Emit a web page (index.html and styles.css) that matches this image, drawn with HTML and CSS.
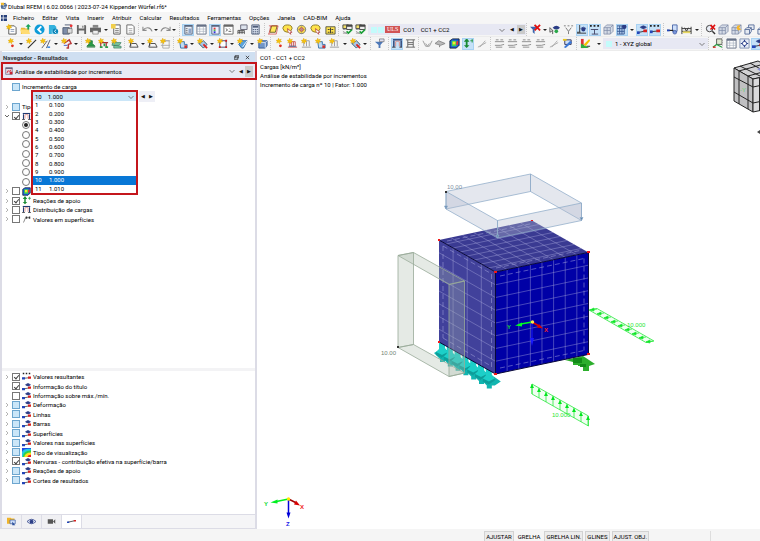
FILE: index.html
```html
<!DOCTYPE html>
<html lang="pt">
<head>
<meta charset="utf-8">
<title>Dlubal RFEM</title>
<link rel="stylesheet" href="styles.css">
</head>
<body>
<svg class="defs" aria-hidden="true">
  <symbol id="i-new" viewBox="0 0 12 12"><path d="M3 2h6l2 2v7H3z" fill="#fff" stroke="#555"/><path d="M5 6h4M5 8h4" stroke="#8a9ab5"/><use href="#star"/></symbol>
  <symbol id="star" viewBox="0 0 12 12"><path d="M3 0l.8 2L6 1.200 5 3l1.500 1-2 .3L4 6.500 2.800 4.700.8 5.500 1.500 3.500 0 2.500l2-.2z" fill="#f5c211" stroke="#d89a00" stroke-width=".3"/></symbol>
  <symbol id="i-open" viewBox="0 0 12 12"><path d="M1 4h4l1 1h4v6H1z" fill="#e8b838"/><path d="M0 6h9l2 5H2z" fill="#ffdc73"/><path d="M9 0L6 3h2v3h2V3h2z" fill="#18a558"/></symbol>
  <symbol id="i-back" viewBox="0 0 12 12"><circle cx="6" cy="6" r="5.500" fill="#0d9bd8"/><path d="M8 2.500L4.500 6 8 9.500" fill="none" stroke="#fff" stroke-width="2"/></symbol>
  <symbol id="i-cloud" viewBox="0 0 12 12"><path d="M1 1h6l2 2v8H1z" fill="#33b1dd"/><path d="M4 7h7v4H4z" fill="#8ad5ee"/><circle cx="8" cy="8" r="3" fill="#0b84b8"/><path d="M7 8l2-2M7 8l2 2" stroke="#fff"/></symbol>
  <symbol id="i-parts" viewBox="0 0 12 12"><path d="M1 4h7v7H1z" fill="#7e8da8" stroke="#4d5a73"/><path d="M3 1h7v7" fill="none" stroke="#4d5a73"/><path d="M6 5h5v5H6z" fill="#ddd" stroke="#555" stroke-width=".6"/><circle cx="10" cy="2" r="1.500" fill="#e33"/></symbol>
  <symbol id="i-save" viewBox="0 0 12 12"><path d="M1 1h9l1 1v9H1z" fill="#666"/><path d="M3 1h6v4H3zM3 7h6v4H3z" fill="#eee"/><path d="M7 2h1v2H7z" fill="#555"/></symbol>
  <symbol id="i-print" viewBox="0 0 12 12"><path d="M3 1h6v3H3z" fill="#888"/><path d="M0 4h12v5H0z" fill="#666"/><path d="M3 7h6v4H3z" fill="#eee" stroke="#555" stroke-width=".6"/></symbol>
  <symbol id="i-report" viewBox="0 0 12 12"><path d="M3 1h7v10H3z" fill="#fff" stroke="#555"/><path d="M4.500 5h4M4.500 7h4M4.500 9h4" stroke="#777"/><path d="M0 0h5v5H0z" fill="#f1cf4b"/></symbol>
  <symbol id="i-doc" viewBox="0 0 12 12"><path d="M2 1h6l2 2v8H2z" fill="#fff" stroke="#666"/><path d="M4 5h4M4 7h4M4 9h4" stroke="#888" stroke-width=".7"/></symbol>
  <symbol id="i-undo" viewBox="0 0 12 12"><path d="M1 3v4h4M1 7c3-4 8-4 10 1" fill="none" stroke="#8c8c8c" stroke-width="1.200"/></symbol>
  <symbol id="i-redo" viewBox="0 0 12 12"><path d="M11 3v4H7M11 7C8 3 3 3 1 8" fill="none" stroke="#8c8c8c" stroke-width="1.200"/></symbol>
  <symbol id="i-nav" viewBox="0 0 12 12"><path d="M2 1h8v10H2z" fill="#e8edf5" stroke="#56657e"/><path d="M2 1h8v2H2z" fill="#56657e"/><path d="M6 5h3v5H6z" fill="#8fa4c6"/><path d="M3 5h2M3 7h2M3 9h2" stroke="#444" stroke-width=".7"/></symbol>
  <symbol id="i-table" viewBox="0 0 12 12"><path d="M1 1h10v10H1z" fill="#fff" stroke="#677287"/><path d="M1 1h10v2H1z" fill="#677287"/><path d="M1 5.500h10M1 8h10M4 3v8M8 3v8" stroke="#a5adbb" stroke-width=".7"/></symbol>
  <symbol id="i-color" viewBox="0 0 12 12"><path d="M2 1h8v10H2z" fill="#eef" stroke="#56657e"/><path d="M2 1h8v2H2z" fill="#56657e"/><path d="M4 4h2v2H4z" fill="#e33"/><path d="M4 6h2v2H4z" fill="#4b4"/><path d="M4 8h2v2H4z" fill="#33d"/></symbol>
  <symbol id="i-con" viewBox="0 0 12 12"><path d="M1 1h10v10H1z" fill="#fff" stroke="#666"/><path d="M1 1h10v2H1z" fill="#666"/><path d="M3 5l2 1.500L3 8M6 8h3M7 5l1 1" fill="none" stroke="#333" stroke-width=".8"/></symbol>
  <symbol id="i-wire" viewBox="0 0 12 12"><path d="M4 1h7v5H4z" fill="#dde3ed" stroke="#667"/><path d="M1 11V7h7v4M3 7v4M5.500 7v4M1 9h7" fill="none" stroke="#333" stroke-width=".8"/></symbol>
  <symbol id="i-calc" viewBox="0 0 12 12"><path d="M2 1h8v10H2z" fill="#dce4f2" stroke="#4f5d78"/><path d="M3 2h6v2H3z" fill="#4f5d78"/><path d="M3 6h6M3 8h6M3 10h6" stroke="#4f5d78" stroke-dasharray="1.500 .7"/></symbol>
  <symbol id="i-poly" viewBox="0 0 12 12"><path d="M4 2h6L8 9H2z" fill="#ffe95c" stroke="#6b5f20"/><path d="M1 2h10M9 11H0M3 2L1 11M11 2L9 11" stroke="#c33" stroke-width=".7"/></symbol>
  <symbol id="i-las" viewBox="0 0 12 12"><path d="M1 5q0-4 5-4t5 4q-1 4-5 4T1 5z" fill="#ffe34c" stroke="#8b7a20"/><path d="M6 5l5 4-2 .3.5 2-3-3z" fill="#fff" stroke="#a33" stroke-width=".8"/></symbol>
  <symbol id="i-ring" viewBox="0 0 12 12"><circle cx="6" cy="6" r="4.500" fill="#ffe34c" stroke="#777"/><circle cx="6" cy="6" r="2" fill="#f9a" stroke="#a44"/><path d="M6 1v10M1 6h10" stroke="#887" stroke-width=".5"/></symbol>
  <symbol id="i-box" viewBox="0 0 12 12"><path d="M1 3h10v8H1z" fill="#ffe34c" stroke="#554"/><path d="M3 6h2M7 6h2M3 9h2M7 9h2M6 4v6" stroke="#333"/></symbol>
  <symbol id="i-check" viewBox="0 0 12 12"><path d="M1 1h6v4H1z" fill="#f1df6a" stroke="#444"/><path d="M5 1h6v5H5z" fill="#eee" stroke="#444"/><path d="M5 1h6v2H5z" fill="#444"/><path d="M1 8l5 3M1 6h3M1 10h4" stroke="#999"/><path d="M5 8l2 2 4-4" fill="none" stroke="#1a9d35" stroke-width="1.800"/></symbol>
  <symbol id="i-fx" viewBox="0 0 12 12"><path d="M0 3h8L5 6v5L3 9V6z" fill="#3a66b0"/><path d="M5 1l6 6M11 1L5 7" stroke="#e01010" stroke-width="2"/></symbol>
  <symbol id="i-filter" viewBox="0 0 12 12"><path d="M1 4h9L7 7.500V11H5V7.500z" fill="#4d78b8"/><path d="M6 1h5v3H6z" fill="#dde" stroke="#555" stroke-width=".6"/></symbol>
  <symbol id="i-eye" viewBox="0 0 12 12"><path d="M1 4v5l3-2zM4 7v4" fill="none" stroke="#555"/><path d="M4 4q4-4 8 0-4 4-8 0" fill="#2b3d86"/><circle cx="8" cy="8" r="2" fill="#2aa84a"/></symbol>
  <symbol id="i-hang" viewBox="0 0 12 12"><path d="M1 2h2M5 2h2M9 2h2M3 4l3 4 3-4M6 8v3" stroke="#777" fill="none"/></symbol>
  <symbol id="i-sup" viewBox="0 0 12 12"><path d="M4 1v8M1 10h10M1 9h4" stroke="#333" fill="none"/><circle cx="8" cy="6" r="2.200" fill="#2b3d86"/><path d="M5 5q3-3 6 0" stroke="#2b3d86" fill="none"/></symbol>
  <symbol id="i-xxx" viewBox="0 0 12 12"><path d="M1 2h2M5 2h2M9 2h2" stroke="#222" stroke-width="2"/><path d="M2 6h8M6 6v5M3 11h7" stroke="#446" fill="none"/></symbol>
  <symbol id="i-cube" viewBox="0 0 12 12"><path d="M1 4l3-3h7v7l-3 3H1z" fill="#d5dbe6" stroke="#7c88a5" stroke-width=".8"/><path d="M1 4h7l3-3M8 4v7M4.500 4v7M1 7h7" fill="none" stroke="#7c88a5" stroke-width=".8"/></symbol>
  <symbol id="i-cubes" viewBox="0 0 12 12"><use href="#i-cube"/><path d="M7 2l3-1-1 3 2 2-3 1-2-2z" fill="#f5b52a"/></symbol>
  <symbol id="i-pair" viewBox="0 0 12 12"><path d="M5 1h6v5H5z" fill="#e5eaf2" stroke="#5c719c"/><path d="M1 6l2-2h5v4l-2 3H1z" fill="#e5eaf2" stroke="#5c719c"/><path d="M1 6h5v5M6 6l2-2" fill="none" stroke="#5c719c"/></symbol>
  <symbol id="i-mesh" viewBox="0 0 12 12"><path d="M1 2h8v9H1z" fill="#b8d0f0" stroke="#375a94"/><path d="M1 5h8M1 8h8M4 2v9M6.500 2v9" stroke="#375a94"/><circle cx="9" cy="3" r="2.500" fill="#2b3d86"/></symbol>
  <symbol id="i-res" viewBox="0 0 12 12"><path d="M1 9.500l10-2" stroke="#333" stroke-width="1"/><path d="M0 8h4v3H0z" fill="#2346b8"/><path d="M8 6h4v3H8z" fill="#d82020"/><path d="M4 3.500q4-4 8 0-4 4-8 0" fill="#3d4f94"/><circle cx="8" cy="3.500" r="1.600" fill="#2b3d86"/></symbol>
  <symbol id="i-resx" viewBox="0 0 12 12"><path d="M1 2h2M5 2h2M9 2h2" stroke="#222" stroke-width="2"/><path d="M1 8.500l10-1" stroke="#333"/><path d="M0 7h4v3H0z" fill="#2346b8"/><path d="M8 6h4v3H8z" fill="#d82020"/></symbol>
  <symbol id="i-line" viewBox="0 0 12 12"><path d="M1 7l9-2" stroke="#222"/><path d="M0 6h3v2H0z" fill="#2346b8"/><path d="M9 4h3v2H9z" fill="#d82020"/></symbol>
  <symbol id="i-rwin" viewBox="0 0 12 12"><path d="M6 1h5v7H6z" fill="#cfe0fa" stroke="#4a67a8"/><path d="M0 7h7" stroke="#222" stroke-width="1.300"/><path d="M0 6h3v2H0z" fill="#2346b8"/><circle cx="8.500" cy="9" r="2" fill="#7795d8" stroke="#3550a0" stroke-width=".7"/></symbol>
  <symbol id="i-dim" viewBox="0 0 12 12"><path d="M1 3v8M11 3v8M1 5h10M1 8h10M4 4l2 4 2-4" stroke="#333" fill="none"/><path d="M2 8h8v2H2z" fill="#e8d860"/></symbol>
  <symbol id="i-find" viewBox="0 0 12 12"><circle cx="5" cy="5" r="3.500" fill="#e9eef6" stroke="#333"/><path d="M8 8l3 3" stroke="#333" stroke-width="1.500"/><path d="M6 1l5 5M11 1L6 6" stroke="#e01010" stroke-width="1.700"/></symbol>
  <symbol id="i-node" viewBox="0 0 12 12"><use href="#star" x="2"/><circle cx="7" cy="8.500" r="1.500" fill="#e03020"/></symbol>
  <symbol id="i-ln" viewBox="0 0 12 12"><path d="M2 11l9-9" stroke="#333" stroke-width="1.300"/><use href="#star"/></symbol>
  <symbol id="i-lnx" viewBox="0 0 12 12"><path d="M2 11l6-8M7 11l4-9" stroke="#556" stroke-width="1"/><path d="M8 10h3" stroke="#27d" stroke-width="1.500"/><use href="#star"/></symbol>
  <symbol id="i-mem" viewBox="0 0 12 12"><path d="M3 6l6-4 2 4-3 1v4H6" fill="none" stroke="#b83838" stroke-width="1.600"/><path d="M3 8h4" stroke="#35c"/><use href="#star"/></symbol>
  <symbol id="i-gs" viewBox="0 0 12 12"><path d="M5 3h3v3l3 3H2l3-3zM2 10h9" fill="#2a9a48" stroke="#14702c" stroke-width=".8"/><use href="#star"/></symbol>
  <symbol id="i-rs" viewBox="0 0 12 12"><path d="M2 5h9M3 5v6M9 5v6" stroke="#a33" stroke-width="1.300"/><path d="M2 9h3v2H2zM8 9h3v2H8zM6 6h2v3H6z" fill="#28a04a"/><use href="#star"/></symbol>
  <symbol id="i-surf" viewBox="0 0 12 12"><path d="M2 5h9l-2 3H1zM3 8l8 1v2H3z" fill="#7fc8a0" stroke="#36755a" stroke-width=".7"/><use href="#star"/></symbol>
  <symbol id="i-im" viewBox="0 0 12 12"><path d="M3 3v6M3 6h6l2 4H2z" fill="none" stroke="#444"/><use href="#star"/></symbol>
  <symbol id="i-sec" viewBox="0 0 12 12"><path d="M3 3h7v8H3zM1 3h10M1 8h10" fill="none" stroke="#aaa"/><use href="#star"/></symbol>
  <symbol id="i-bl" viewBox="0 0 12 12"><path d="M3 4h5v3h3v4H4z" fill="#bfdcf5" stroke="#3670a8"/><path d="M8 8h3v3H8z" fill="#c33"/><use href="#star"/></symbol>
  <symbol id="i-rd" viewBox="0 0 12 12"><path d="M2 6l5-3 4 4-4 4z" fill="#a8c8e8" stroke="#356"/><path d="M7 7l4 4" stroke="#d22" stroke-width="2"/><use href="#star"/></symbol>
  <symbol id="i-sq" viewBox="0 0 12 12"><path d="M3 3h7v7H3z" fill="#fff" stroke="#446"/><path d="M2 9h2v2H2zM9 9h2v2H9zM9 2h2v2H9z" fill="#c22"/><use href="#star"/></symbol>
  <symbol id="i-sf" viewBox="0 0 12 12"><path d="M2 7l3-4h6l-4 8H5z" fill="#5aa2dc" stroke="#2c68a0"/><path d="M6 10l5-7" stroke="#fff"/><use href="#star"/></symbol>
  <symbol id="i-bx" viewBox="0 0 12 12"><path d="M2 5l2-2h7v5l-2 3H2z" fill="#7196c8" stroke="#345a92"/><path d="M2 5h7v6M9 5l2-2" fill="none" stroke="#d5e2f5"/><use href="#star"/></symbol>
  <symbol id="i-ld" viewBox="0 0 12 12"><path d="M3 4h6v5H3zM1 10h10M5 4v5M7 4v5" fill="none" stroke="#c55"/><path d="M2 9h8" stroke="#47a"/><use href="#star"/></symbol>
  <symbol id="i-gr" viewBox="0 0 12 12"><path d="M3 3h6v6M1 10h10M3 4v5M6 4v5" fill="none" stroke="#999"/><use href="#star"/></symbol>
  <symbol id="i-arc" viewBox="0 0 12 12"><path d="M1 2h10" stroke="#223a70" stroke-width="1.500"/><path d="M2 3v7M10 3v7" stroke="#223a70" stroke-width="1.500"/><path d="M4 3.500h4M4 4v5M8 4v5" stroke="#e08a80" stroke-width="1"/><path d="M0 10h4M8 10h4" stroke="#444"/></symbol>
  <symbol id="i-hh" viewBox="0 0 12 12"><path d="M1 2h10M1 10h10M3 2v8M9 2v8M3 5h6M3 7h6" stroke="#666"/></symbol>
  <symbol id="i-vv" viewBox="0 0 12 12"><path d="M1 3l3 6h4l3-6M4 6l2 3 2-3" fill="none" stroke="#999"/></symbol>
  <symbol id="i-tab" viewBox="0 0 12 12"><path d="M0 6l4-3 7 3-5 2z" fill="#bbb" stroke="#888"/><path d="M5 8v2" stroke="#777"/></symbol>
  <symbol id="i-fem" viewBox="0 0 12 12"><path d="M1 3l3-2h7v7l-3 3H1z" fill="#1c5de0" stroke="#123"/><path d="M3 3h5v6H3z" fill="#3fd84f"/><path d="M4 4h3v3H4z" fill="#ffe22e"/><path d="M8 4l2-1v4l-2 1z" fill="#e33"/></symbol>
  <symbol id="i-reac" viewBox="0 0 12 12"><path d="M4 3v6" stroke="#1a8a34" stroke-width="2"/><path d="M4 0L1 4h6zM1 8h6l-3 3z" fill="#1a8a34"/><path d="M8 3h4M10 1v4" stroke="#2a9a48"/></symbol>
  <symbol id="i-diag" viewBox="0 0 12 12"><path d="M1 10l9-5M3 10l6-7" stroke="#aaa"/></symbol>
  <symbol id="i-as" viewBox="0 0 12 12"><path d="M1 4h10M2 2h3M7 2h3M1 8h6l4-1M2 10h7" stroke="#8a8a8a" fill="none"/></symbol>
  <symbol id="i-pen" viewBox="0 0 12 12"><path d="M3 2h7v5H3z" fill="#cfe0fa" stroke="#335"/><path d="M2 10l7-7 2 2-7 6z" fill="#3a78d8"/><path d="M1 1h4v2H1z" fill="#e8c71e"/></symbol>
  <symbol id="i-iso" viewBox="0 0 12 12"><path d="M0 0h12v12H0z" fill="#1d48e0"/><path d="M0 5q2-4 9-4h3v11H0z" fill="#22c9e8"/><path d="M1 12Q1 4 12 3v9z" fill="#2fd24a"/><path d="M3 12q1-6 9-6v6z" fill="#ffdf20"/><path d="M7 12q1-3 5-3v3z" fill="#e81f1f"/></symbol>
  <symbol id="i-clr" viewBox="0 0 12 12"><path d="M1 1h3v10H1z" fill="#d33"/><path d="M1 6l9 5H1z" fill="#2fae3f"/><path d="M4 7l6-6 1 2-5 6z" fill="#f2c400"/><path d="M7 9h4" stroke="#222"/></symbol>
  <symbol id="i-ax" viewBox="0 0 12 12"><path d="M5 1h6v6H5z" fill="#dfe8d0" stroke="#555"/><path d="M1 10l4-3 6 3" fill="none" stroke="#28a040" stroke-width="1.300"/><path d="M1 10h3" stroke="#d22" stroke-width="1.500"/></symbol>
  <symbol id="i-gear" viewBox="0 0 12 12"><path d="M1 1h10v10H1z" fill="#e6ecf8" stroke="#8090b0"/><path d="M6 2v8M2 6h8" stroke="#2a3f8a" stroke-width="1.300"/><circle cx="6" cy="6" r="2.300" fill="#fff" stroke="#2a3f8a"/></symbol>
  <symbol id="i-flag" viewBox="0 0 12 12"><path d="M2 10l3-7" stroke="#666"/><path d="M5 2h2v3H5zM9 2h2v3H9z" fill="#333"/><path d="M7 3.500h2" stroke="#333"/></symbol>
  <symbol id="i-cam" viewBox="0 0 12 12"><path d="M1 3h7v6H1zM8 6l3-3v6z" fill="#555"/></symbol>
  <symbol id="i-view" viewBox="0 0 12 12"><path d="M0 6q6-6 12 0-6 6-12 0" fill="#dbe2f2" stroke="#2b3d86"/><circle cx="6" cy="6" r="2.500" fill="#2b3d86"/></symbol>
  <symbol id="i-proj" viewBox="0 0 12 12"><path d="M0 1h5l1 1h4v7H0z" fill="#f0b429"/><path d="M4 4h7v5H4z" fill="#cfe0fa" stroke="#4a67a8"/><path d="M7 6l4 5H7z" fill="#2b50a0"/></symbol>
  <symbol id="i-stab" viewBox="0 0 12 12"><path d="M1 1h10v10H1z" fill="#e6dfe8" stroke="#6a6580"/><path d="M1 1h10v2H1z" fill="#6a6580"/><path d="M3 9q1-5 3-3t3-2" fill="none" stroke="#c23" stroke-width="1.200"/><path d="M7 7h4v4H7z" fill="#c23"/></symbol>
  <symbol id="chev" viewBox="0 0 12 12"><path d="M1 4l5 5 5-5" fill="none" stroke="#555" stroke-width="1.500"/></symbol>
  <symbol id="logo" viewBox="0 0 12 12"><path d="M2 3l6-2 3 4-3 6-6-1-1-4z" fill="#4f6b94"/><path d="M1 1h5v4H2z" fill="#f0b92a"/><path d="M5 5l5-3M4 9l6-2M4 4l4 6" stroke="#dbe6f5" stroke-width=".8"/></symbol>
</svg>

<div class="app">
  <header class="title"><svg><use href="#logo"/></svg><h1>Dlubal RFEM | 6.02.0066 | 2023-07-24 Kippender Würfel.rf6*</h1></header>
  <nav class="menu" aria-label="Menu">
    <svg viewBox="0 0 8 8" aria-hidden="true"><path d="M0 0h8v8H0z" fill="#27407a"/><path d="M0 4h8M3 0v8" stroke="#fff"/></svg>
    <a href="#">Ficheiro</a><a href="#">Editar</a><a href="#">Vista</a><a href="#">Inserir</a><a href="#">Atribuir</a><a href="#">Calcular</a><a href="#">Resultados</a><a href="#">Ferramentas</a><a href="#">Opções</a><a href="#">Janela</a><a href="#">CAD-BIM</a><a href="#">Ajuda</a>
  </nav>
  <div class="bar" id="bar1" role="toolbar" aria-label="Principal"></div>
  <div class="bar" id="bar2" role="toolbar" aria-label="Modelo"></div>

  <main class="work">
    <aside class="navigator">
      <div class="nav-head"><h2>Navegador - Resultados</h2>
        <button aria-label="Destacar"><svg viewBox="0 0 12 12"><path d="M3 1h8v6H3zM1 4h8v7H1z" fill="#cfdff1" stroke="#222" stroke-width="1.500"/></svg></button>
        <button aria-label="Fechar"><svg viewBox="0 0 12 12"><path d="M2 2l8 8M10 2l-8 8" stroke="#222" stroke-width="1.700"/></svg></button>
      </div>
      <div class="analysis">
        <svg class="ic"><use href="#i-stab"/></svg>
        <select aria-label="Análise"><option>Análise de estabilidade por incrementos</option></select>
        <svg class="chev"><use href="#chev"/></svg>
        <button class="step" aria-label="Anterior">◀</button><button class="step grey" aria-label="Seguinte">▶</button>
      </div>
      <section class="upper">
        <label class="root"><input type="checkbox" class="part">Incremento de carga</label>
        <div class="increment">
          <div class="drop">
            <div class="drop-head">
              <select aria-label="Incremento de carga"><option>10 &nbsp; &nbsp;1.000</option></select>
              <svg class="chev"><use href="#chev"/></svg>
            </div>
            <ul role="listbox" aria-label="Incrementos" id="steps"></ul>
          </div>
          <button class="step" aria-label="Incremento anterior">◀</button><button class="step" aria-label="Incremento seguinte">▶</button>
        </div>
        <div class="tree" id="tree1"></div>
      </section>
      <section class="lower"><div class="tree" id="tree2"></div></section>
      <div class="tabs">
        <button aria-label="Dados"><svg><use href="#i-proj"/></svg></button>
        <button aria-label="Mostrar"><svg><use href="#i-view"/></svg></button>
        <button aria-label="Vistas"><svg><use href="#i-cam"/></svg></button>
        <button class="on" aria-label="Resultados"><svg><use href="#i-line"/></svg></button>
      </div>
    </aside>

    <section class="stage">
      <svg class="scene" viewBox="258 51 502 478" preserveAspectRatio="xMinYMin meet" aria-label="Modelo">
        <defs>
          <path id="g8" d="M1 0v8M2 0v8M3 0v8M4 0v8M5 0v8M6 0v8M7 0v8M0 1h8M0 2h8M0 3h8M0 4h8M0 5h8M0 6h8M0 7h8"/>
          <path id="g4" d="M1 0v8M2 0v8M3 0v8M0 1h4M0 2h4M0 3h4M0 4h4M0 5h4M0 6h4M0 7h4"/>
          <g id="foot"><path d="M-8 0l5-3h8l7 5-6 4h-3v3h-5V6z" fill="#11b5b0"/><path d="M-3-12h6v7l3 4-6 3-6-3 3-3z" fill="#1ccfc8"/><path d="M-6-1l6 3 6-3v2l-6 4-6-3z" fill="#0c8f8c" opacity=".6"/></g>
          <path id="up" d="M0 0l-2 4h4z" fill="#00e61e"/>
        </defs>
        <g><path d="M565 360l18-4 12 8-6 2v5h-6v-5h-5v-1h-5v-3z" fill="#2cae2c"/><path d="M573 358h9v5h-9zM580 364h6v3h-6z" fill="#138a18"/></g>
        <g id="feet"></g>
        <path d="M439 240l56.500 32v102L439 342z" fill="#41419b"/>
        <path d="M439 240l93-19.600 56.500 32-93 19.600z" fill="#3a3a92"/>
        <path d="M495.500 272l93-19.600v102l-93 19.600z" fill="#0000a6"/>
        <g class="mesh">
          <use href="#g4" transform="matrix(14.100 8 0 12.750 439 240)"/>
          <use href="#g8" transform="matrix(7.060 4 11.620 -2.450 439 240)"/>
          <use href="#g8" transform="matrix(11.620 -2.450 0 12.750 495.500 272)"/>
        </g>
        <g class="dash"><path d="M443 246v92M491.500 274v94M443 246l48 27.500M443 338l48 28M500 276l84-17.500M500 368l84-17.500M584 258.500v92M447 241l85-17.500M496 268l84-17.500"/></g>
        <path d="M439 240l56.500 32 93-19.600M495.500 272v102M439 342l56.500 32 93-19.600v-102" fill="none" stroke="#080838"/>
        <g class="frame-top">
          <path d="M446 191.500l84.500-17.500v17.500L446 209z"/><path d="M530.500 174l51 29v17.500l-51-29z"/><path d="M446 191.500l51.500 29V238L446 209z"/><path d="M497.500 220.500l84-17.500v17.500l-84 17.500z"/>
          <path d="M444.500 206h3l-1.500 3zM496 235h3l-1.500 3zM580 217.500h3l-1.500 3z" class="tip"/>
        </g>
        <g class="frame-side">
          <path d="M398 255.500l15.500-3 51 28.500-15.500 3.500z"/><path d="M398 255.500l15.500-3v92l-15.500 3z"/><path d="M398 347.500l15.500-3 51 28.500-15.500 3.500z"/><path d="M449 284.500l15.500-3.500v92l-15.500 3.500z"/>
        </g>
        <path d="M438 239h2v2h-2zM494 271h3v2h-3zM587 251h3v2h-3zM531 220h2v1h-2zM587 353h3v2h-3zM438 341h2v2h-2zM494 373h3v2h-3z" fill="#f01818"/>
        <path d="M445 191h2v2h-2zM397 346h2v2h-2z" fill="#333"/>
        <text x="447" y="189" class="t1">10.00</text><text x="381" y="355" class="t2">10.00</text>
        <g class="load"><path d="M589 310l8-1.500 57 32.500-8 1.500z"/><path d="M532 384l56.500 32v10L532 394z"/><g id="arrows"></g></g>
        <text x="627" y="327" class="t3">10.000</text><text x="552" y="417" class="t3">10.000</text>
        <g>
          <path d="M532 322v18" stroke="#1818ff"/><path d="M530 338h4l-2 8z" fill="#1818ff"/>
          <path d="M532 322l-11 2" stroke="#00ff20" stroke-width="1.500"/><path d="M515 325.500l7-3v4z" fill="#00ff20"/>
          <path d="M532 322l7 4" stroke="#d80000" stroke-width="1.500"/><path d="M543 328.500l-6-1 2-3.500z" fill="#d80000"/>
          <circle cx="532.500" cy="322" r="1.700" fill="#ffe94a"/>
        </g>
        <text x="507" y="329" class="ax g">Y</text><text x="544" y="332" class="ax r">X</text>
        <g>
          <path d="M288.500 499l-12 2.500" stroke="#00f020" stroke-width="1.500"/><path d="M270.500 502.500l7-3v4z" fill="#00f020"/>
          <path d="M288.500 499v15" stroke="#0000d8" stroke-width="1.500"/><path d="M286.500 512.500h4l-2 6z" fill="#0000d8"/>
          <path d="M288.500 499l8 4" stroke="#a00000" stroke-width="1.500"/><path d="M300 505.500l-6-1 2-4z" fill="#d80000"/>
          <circle cx="288.500" cy="499" r="1.700" fill="#ffe600"/>
        </g>
        <text x="264" y="506" class="ax g">Y</text><text x="300" y="509" class="ax r">X</text><text x="286" y="526" class="ax z">Z</text>
        <g stroke="#222" stroke-linejoin="round">
          <path d="M734 68l24-7 24 12-29 6z" fill="#d2d2d4"/><path d="M734 68l19 11v33l-19-11z" fill="#c0c0c2"/><path d="M753 79l29-6v33l-29 6z" fill="#dadadc"/>
          <path d="M739 71v33M748 76v33M734 77l19 10 29-6M734 92l19 11 29-6M759.500 78v33M739 71l25-7M748 76l26-7M740 66l22 11M750 63l21 12" fill="none"/>
        </g>
        <text x="740" y="92" class="cubeface">-Y</text><path d="M757 69l3-1v3z" fill="#8890d8"/><path d="M757 132l3-2v4z" fill="#444"/>
      </svg>
      <div class="info"><p>CO1 - CC1 + CC2</p><p>Cargas [kN/m²]</p><p>Análise de estabilidade por incrementos</p><p>Incremento de carga nº 10 | Fator: 1.000</p></div>
    </section>
  </main>

  <footer class="status"><button class="on">AJUSTAR</button><button>GRELHA</button><button class="on">GRELHA LIN.</button><button class="on">GLINES</button><button class="on">AJUST. OBJ.</button><span class="cell"></span><span class="cell"></span></footer>
</div>
<script src="app.js"></script>
</body>
</html>
```
FILE: styles.css
```css
* { box-sizing: border-box; }
body { margin: 0; font: 6px/9px Roboto, "Open Sans", sans-serif; color: #000; background: #fff; }
h1, h2, p, ul { margin: 0; padding: 0; font-size: inherit; font-weight: normal; }
button, select, input { font: inherit; color: inherit; margin: 0; }
button { border: 0; padding: 0; background: none; }
select { appearance: none; border: 0; padding: 0; background: none; }
svg { display: block; flex: none; }
.defs { position: absolute; width: 0; height: 0; }

.app { display: flex; flex-direction: column; min-height: 100vh; }
.title { display: flex; align-items: center; height: 12px; }
.title svg { width: 8px; height: 8px; }
.menu { display: flex; align-items: center; height: 11px; background: #f6f6f6; }
.menu svg { width: 8px; height: 6px; margin-right: 5px; }
.menu a { color: inherit; text-decoration: none; margin-right: 8px; }

.bar { display: grid; height: 14px; background: #f5f5f5; border-bottom: 1px solid #ececec; overflow: hidden; }
#bar1 { grid-template-columns: minmax(0, 138fr) minmax(0, 41fr) minmax(0, 85fr) minmax(0, 74fr) minmax(0, 30fr) minmax(0, 158fr) minmax(0, 137fr) minmax(0, 38fr) minmax(0, 59fr); }
#bar2 { grid-template-columns: minmax(0, 81fr) minmax(0, 43fr) minmax(0, 49fr) minmax(0, 97fr) minmax(0, 100fr) minmax(0, 18fr) minmax(0, 30fr) minmax(0, 72fr) minmax(0, 86fr) minmax(0, 27fr) minmax(0, 105fr) minmax(0, 14fr) minmax(0, 38fr); }
.group { display: flex; align-items: center; justify-content: space-between; padding: 0 2px; border-left: 1px dotted #c8c8c8; }
.group:first-child { border: 0; padding-left: 5px; }
.group.cut { justify-content: flex-start; gap: 1px; }
.b { width: 12px; height: 12px; flex: none; display: grid; place-items: center; }
.b svg { width: 11px; height: 11px; }
.b.on { background: #c5e1f8; outline: 1px solid #a8d2f3; outline-offset: -1px; }
.caret { width: 5px; flex: none; height: 12px; display: grid; place-items: center; }
.caret::after { content: ""; border: 2px solid transparent; border-top-color: #222; border-bottom: 0; }
.combo { display: flex; align-items: center; gap: 1px; padding: 0 1px 0 3px; height: 11px; margin-top: 1px; background: #e7e8f3; }
.combo select { flex: 1; min-width: 0; height: 10px; padding-left: 2px; }
.sw { width: 6px; height: 6px; background: #c4fbfb; flex: none; }
.uls { background: #d15454; color: #fff; padding: 0 2px; line-height: 7px; font-family: "Liberation Serif", serif; }
.chev { width: 6px; height: 6px; margin: 0 2px; pointer-events: none; }
.step { width: 8px; height: 9px; font-size: 5px; line-height: 9px; text-align: center; font-family: "DejaVu Sans", sans-serif; color: #111; flex: none; }
.grey { background: #cbcbcb; }

.work { flex: 1; display: flex; min-height: 0; }
.navigator { width: 257px; flex: none; display: flex; flex-direction: column; border: solid #dcdce6; border-width: 0 2px 1px; background: #fff; }
.nav-head { display: flex; align-items: center; height: 10px; margin-top: 1px; background: #cfdff1; padding-right: 2px; }
.nav-head h2 { flex: 1; font-weight: 700; padding-left: 1px; color: #333; }
.nav-head button { width: 11px; display: grid; place-items: center; }
.nav-head svg { width: 5px; height: 5px; }
.analysis { display: flex; align-items: center; height: 18px; margin: 0 -2px 0 -1px; padding: 0 2px; border: 2px solid #c4161c; background: #e8e9f4; z-index: 1; }
.analysis select { flex: 1; min-width: 0; padding-left: 2px; }
.analysis .ic { width: 8px; height: 8px; }
.analysis .step { height: 11px; line-height: 11px; }
.upper { height: 291px; border-bottom: 3px solid #f3f3f5; padding-top: 2px; }
.root { display: flex; align-items: center; gap: 2px; height: 9px; padding-left: 10px; }
.increment { display: flex; align-items: flex-start; height: 11px; padding-left: 29px; }
.increment > .step { background: #eeeff6; height: 11px; line-height: 11px; }
.drop { width: 107px; border: 2px solid #c4161c; background: #fff; position: relative; z-index: 2; margin: -1px 1px 0 0; }
.drop-head { display: flex; align-items: center; height: 9px; background: #cbe6f8; }
.drop-head select { flex: 1; padding-left: 2px; height: 9px; }
.drop ul { list-style: none; display: grid; grid-auto-rows: 1fr; height: 92px; }
.drop li { display: grid; grid-template-columns: 14px 1fr; align-items: center; padding-left: 2px; line-height: 8px; }
.drop li[aria-selected="true"] { background: #0877d6; color: #fff; }

.tree { display: grid; grid-auto-rows: 1fr; }
#tree1 { height: 122px; }
#tree2 { height: 113px; margin-top: 1px; }
.row { display: flex; align-items: center; gap: 2px; padding-left: 2px; min-height: 0; }
.row label { display: flex; align-items: center; gap: 2px; }
.row .tw { width: 6px; height: 6px; flex: none; display: grid; place-items: center; }
.row .tw svg { width: 6px; height: 6px; }
.row .ic { width: 9px; height: 9px; }
.row.sub { padding-left: 12px; }
input[type="checkbox"], input[type="radio"] { appearance: none; width: 8px; height: 8px; border: 1px solid #777; background: #fff; display: grid; place-items: center; flex: none; }
input[type="radio"] { border-radius: 50%; }
input[type="radio"]:checked::after { content: ""; width: 4px; height: 4px; border-radius: 50%; background: #222; }
input[type="checkbox"]:checked::after { content: ""; width: 2px; height: 4px; border: solid #444; border-width: 0 1px 1px 0; transform: rotate(40deg); }
input[type="checkbox"].part { border-color: #6da6cf; background: #cbe6f8; }
.lower { flex: 1; }
.tabs { display: flex; height: 14px; background: #f5f5f7; border-top: 1px solid #dcdce6; }
.tabs button { width: 20px; border-right: 1px solid #dcdce6; display: grid; place-items: center; background: #f0f0f3; }
.tabs .on { background: #fff; }
.tabs svg { width: 9px; height: 9px; }

.stage { flex: 1; position: relative; min-width: 0; margin-left: 1px; }
.scene { width: 100%; position: absolute; top: 0; left: 0; }
.info { position: relative; padding: 2px 0 0 2px; }
#g8, #g4 { vector-effect: non-scaling-stroke; }
.mesh use { fill: none; stroke: #a8a8dc; stroke-opacity: .42; }
.dash path { fill: none; stroke: #a8a8e0; stroke-opacity: .5; stroke-dasharray: 5 3; }
.frame-top path { fill: #b4bcd0; fill-opacity: .36; stroke: #8fabc8; stroke-opacity: .75; }
.frame-top .tip { fill: #5f86b0; fill-opacity: 1; }
.frame-side path { fill: #aab8aa; fill-opacity: .3; stroke: #98aa98; stroke-opacity: .8; }
.load path { fill: #00e61e; fill-opacity: .06; stroke: #2be93f; stroke-opacity: .8; }
.load .head { fill-opacity: 1; }
text { font: 6px "Liberation Sans", sans-serif; }
.t1 { fill: #7d8fa2; }
.t2 { fill: #738373; }
.t3 { fill: #1ee632; }
.ax { font-weight: bold; }
.g { fill: #10d830; }
.r { fill: #f02020; }
.z { fill: #2020e8; }
.cubeface { fill: #66d070; }

.status { display: flex; justify-content: flex-end; height: 12px; background: #f5f5f5; gap: 2px; padding-top: 2px; }
.status button { padding: 0 1px; border: 1px solid transparent; border-bottom: 0; line-height: 9px; }
.status .on { background: #ececec; border-color: #d2d2d2; }
.cell { width: 60px; border-right: 1px solid #ddd; }
.cell:last-child { width: 47px; border: 0; }
```
FILE: app.js
```js
// Toolbar groups as icon lists; "v" is a drop-down caret, "*" marks an active button.
const icon = n => `<svg><use href="#i-${n}"/></svg>`;
const group = names => `<div class="group">` +
  names.split(' ').map(n => n === 'v' ? '<button class="caret" aria-label="Mais"></button>'
    : `<button class="b${n[0] === '*' ? ' on' : ''}" aria-label="${n.replace('*', '')}">${icon(n.replace('*', ''))}</button>`).join('') + '</div>';
const cut = names => group(names).replace('"group"', '"group cut"');
const chev = '<svg class="chev"><use href="#chev"/></svg>';

document.getElementById('bar1').innerHTML = [
  'new open back cloud parts save print v report doc', 'undo v redo v',
  '*nav table *color con wire calc', 'poly las ring las box', 'check check'
].map(group).join('') +
  `<div class="combo"><i class="sw"></i><i class="sw"></i><span class="uls">ULS</span><select aria-label="Situação"><option>CO1 \u00a0 \u00a0CC1 + CC2</option></select>${chev}<button class="step" aria-label="Anterior">◀</button><button class="step grey" aria-label="Seguinte">▶</button></div>` +
  group('fx v eye hang *sup *xxx cube *mesh v *res *resx') + group('rwin dim v') + cut('find cube cubes pair pair');

document.getElementById('bar2').innerHTML = [
  'node v ln lnx v mem v', 'gs rs surf', 'im v im sec', 'bl v rd v sq v sf v bx',
  'node ld gr bl gr v rd v', 'filter', '*arc hh', 'vv tab fem *reac diag', 'as as as as diag pen', 'clr v'
].map(group).join('') +
  `<div class="combo"><i class="sw"></i><select aria-label="Sistema de eixos"><option>1 - XYZ global</option></select>${chev}</div>` +
  group('ax') + cut('table gear *res');

document.getElementById('steps').innerHTML = ['0.100', '0.200', '0.300', '0.400', '0.500', '0.600', '0.700', '0.800', '0.900', '1.000', '1.010']
  .map((v, i) => `<li role="option" aria-selected="${i === 9}"><span>${i + 1}</span><span>${v}</span></li>`).join('');

// Tree rows: [twisty, box state, icon, label]
const row = ([tw, box, ic, text]) => `<div class="row"><span class="tw">${tw ? `<svg viewBox="0 0 12 12"><path d="${tw === 'v' ? 'M2 4l4 4 4-4' : 'M4 2l4 4-4 4'}" fill="none" stroke="${tw === 'v' ? '#333' : '#999'}" stroke-width="1.500"/></svg>` : ''}</span>` +
  `<label><input type="checkbox" class="${box === 'p' ? 'part' : ''}"${box === 'c' ? ' checked' : ''}>${ic ? `<svg class="ic"><use href="#i-${ic}"/></svg>` : ''}${text}</label></div>`;
const radio = on => `<div class="row sub"><span class="tw"></span><input type="radio" name="result" aria-label="Resultado"${on ? ' checked' : ''}></div>`;
document.getElementById('tree1').innerHTML = row(['>', 'p', '', 'Tipo']) + row(['v', 'c', 'arc', '']) +
  [1, 0, 0, 0, 0, 0, 0].map(radio).join('') +
  [['>', '', 'fem', ''], ['>', 'c', 'reac', 'Reações de apoio'], ['>', '', 'arc', 'Distribuição de cargas'], ['>', '', 'flag', 'Valores em superfícies']].map(row).join('');
document.getElementById('tree2').innerHTML = [
  ['>', 'c', 'resx', 'Valores resultantes'], ['', 'c', 'res', 'Informação do título'], ['', '', 'res', 'Informação sobre máx./mín.'],
  ['>', 'p', 'res', 'Deformação'], ['>', 'p', 'res', 'Linhas'], ['>', 'p', 'res', 'Barras'], ['>', 'p', 'res', 'Superfícies'],
  ['>', 'p', 'res', 'Valores nas superfícies'], ['>', 'p', 'iso', 'Tipo de visualização'],
  ['>', 'c', 'res', 'Nervuras - contribuição efetiva na superfície/barra'], ['>', 'p', 'res', 'Reações de apoio'], ['>', 'p', 'res', 'Cortes de resultados']
].map(row).join('');

// Line supports under the left edge and the arrows of both line loads
document.getElementById('feet').innerHTML = [0, 1, 2, 3, 4, 5, 6]
  .map(i => `<use href="#foot" x="${442 + i * 7.8}" y="${353 + i * 4.4}"/>`).join('');
document.getElementById('arrows').innerHTML = [0, 1, 2, 3, 4, 5, 6, 7, 8].map(i => {
  const x = 532 + i * 7, y = 384 + i * 4, a = 590 + i * 7, b = 310 + i * 4;
  return `<path d="M${x} ${y}v10"/><use href="#up" x="${x}" y="${y}" class="head"/><path d="M${a} ${b}l7-1"/><path d="M${a} ${b}l4-2v3z" class="head"/>`;
}).join('');
```
